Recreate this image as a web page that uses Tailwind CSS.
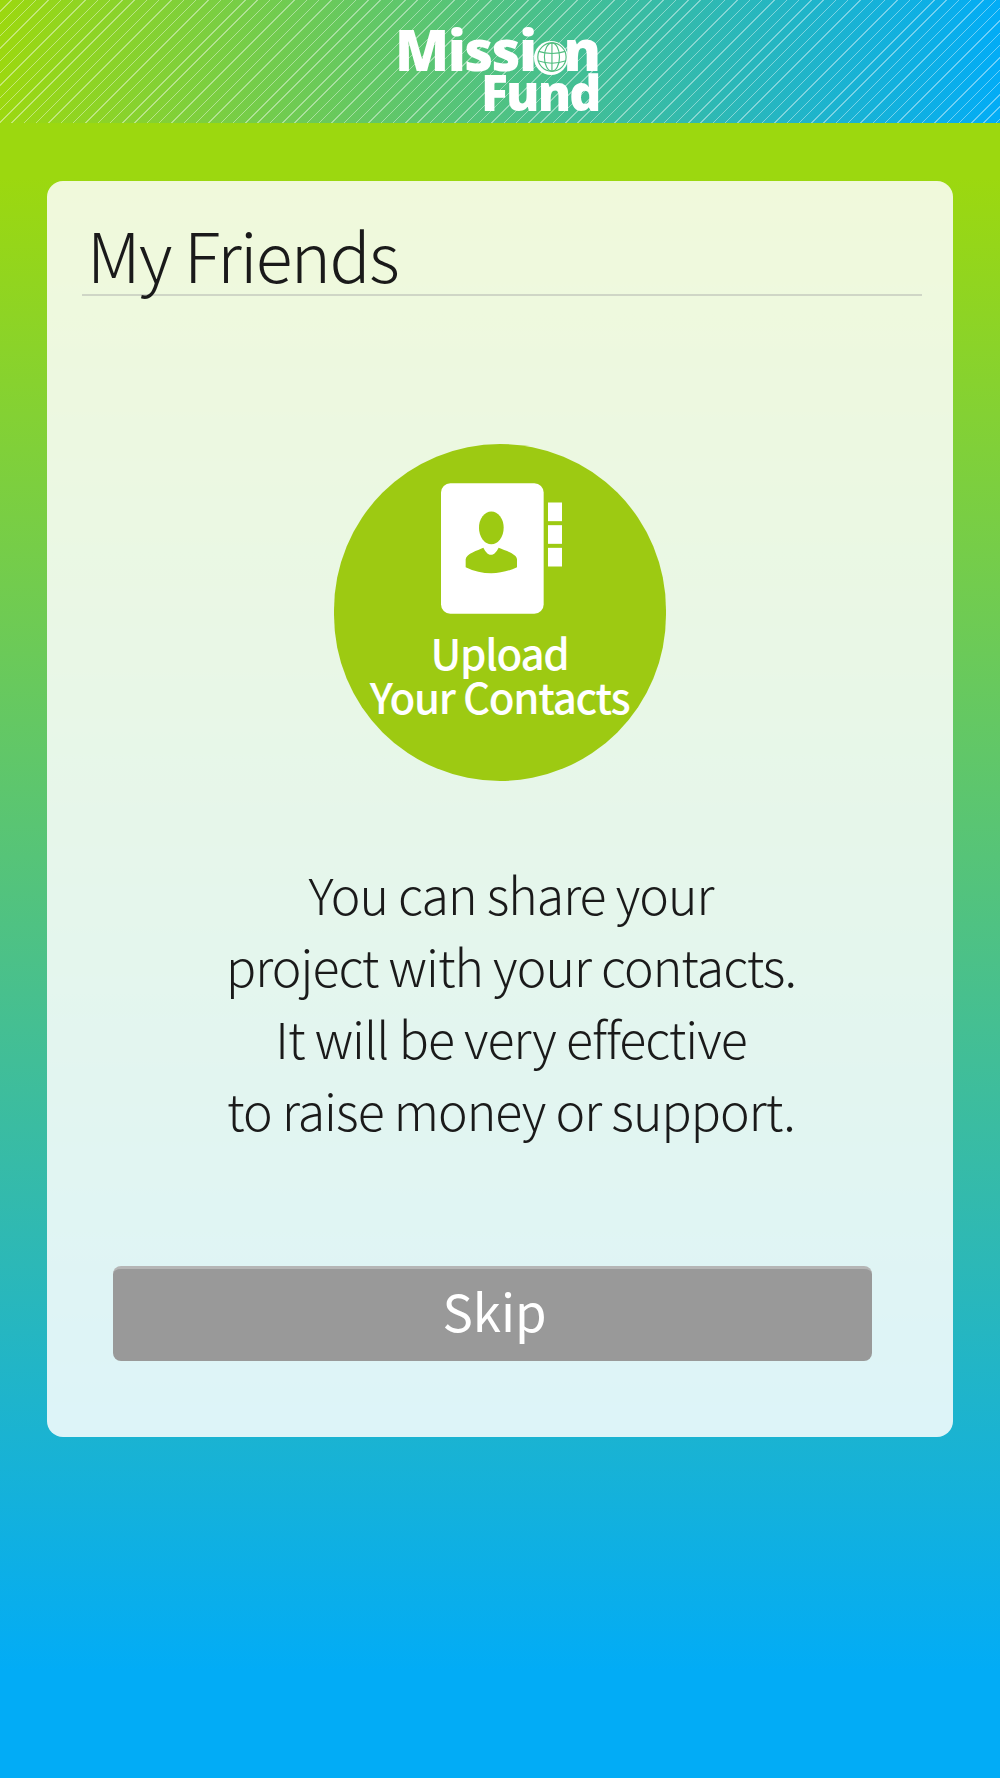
<!DOCTYPE html>
<html lang="en">
<head>
    <meta charset="UTF-8">
    <meta name="viewport" content="width=device-width, initial-scale=1.0">
    <title>My Friends - Mission Fund</title>
    <script src="https://cdn.jsdelivr.net/npm/@tailwindcss/browser@4"></script>
</head>
<body class="font-['Noto_Sans_CJK_KR','Noto_Sans',sans-serif]">
    <div class="w-[1000px] h-[1778px] overflow-hidden flex flex-col bg-[linear-gradient(180deg,#9cd80f_0,#9cd80f_10%,#02acf6_94%,#02acf6_100%)]">
        <!-- header -->
        <header class="h-[123px] shrink-0 flex justify-center bg-[repeating-linear-gradient(135deg,transparent_0,transparent_7.7px,rgba(255,255,255,0.42)_7.7px,rgba(255,255,255,0.42)_8.7px),linear-gradient(90deg,#9cd80f,#02acf6)]">
            <div class="w-[200px] ml-[-1px] pt-[24px] flex flex-col items-end font-['Open_Sans',sans-serif] font-extrabold text-white">
                <div class="flex items-center h-[49px] text-[56px] leading-[50px] tracking-[-1.6px]">
                    <span>Missi</span>
                    <svg class="w-[34px] h-[34px] mt-[18px] ml-[-2px] mr-[-4px]" viewBox="0 0 36 36">
                        <circle cx="18" cy="18" r="18" fill="#fff"/>
                        <g fill="none" stroke="#4fbd7e" stroke-width="1.2">
                            <ellipse cx="19" cy="17" rx="8" ry="15"/>
                            <ellipse cx="19" cy="17" rx="15" ry="15"/>
                            <path d="M19 2v30M5 11c8 3 20 3 28 0M4 21c9 3 21 3 30 0"/>
                        </g>
                    </svg>
                    <span>n</span>
                </div>
                <div class="h-[38px] text-[50px] leading-[38px] tracking-[-1.9px]">Fund</div>
            </div>
        </header>

        <!-- card -->
        <main class="mt-[58px] mx-[47px] h-[1256px] rounded-[16px] bg-white/85 flex flex-col">
            <div class="mt-[29px] ml-[35px] mr-[31px] h-[86px] border-b-2 border-[#cfd6c6] pl-[5px] font-light text-[68px] leading-[88px] tracking-[-1.6px] text-[#1a1a1a]">My Friends</div>

            <button class="self-center mt-[148px] ml-[-1px] w-[332px] h-[337px] rounded-full bg-[#9dca12] flex flex-col items-center text-white pt-[39px]">
                <svg class="w-[121px] h-[131px] ml-[3px]" viewBox="0 0 363 392">
                    <rect width="308" height="392" rx="28" fill="#fff"/>
                    <rect x="321" y="58" width="42" height="56" fill="#fff"/>
                    <rect x="321" y="126" width="42" height="56" fill="#fff"/>
                    <rect x="321" y="194" width="42" height="56" fill="#fff"/>
                    <ellipse cx="151" cy="134" rx="37" ry="49" fill="#9dca12"/>
                    <path d="M74 252V228C76 212 110 202 127 194C134 207 140 215 150 215C160 215 166 207 173 194C192 202 226 212 228 228V252C178 276 124 276 74 252Z" fill="#9dca12"/>
                </svg>
                <span class="mt-[16px] font-medium text-[42px] leading-[44px] tracking-[-1.26px]">Upload<br>Your Contacts</span>
            </button>

            <p class="mt-[76px] ml-[22px] text-center font-light text-[50px] leading-[72px] tracking-[-0.95px] text-[#1a1a1a]">
                You can share your<br>
                project with your contacts.<br>
                It will be very effective<br>
                to raise money or support.
            </p>

            <button class="mt-[121px] ml-[66px] mr-[81px] h-[95px] rounded-[8px] bg-[#999999] border-t-[3px] border-[#b5b5b5] text-white font-normal text-[51px] leading-[80px] pb-[10px] pl-[4px]">Skip</button>
        </main>
    </div>
</body>
</html>
